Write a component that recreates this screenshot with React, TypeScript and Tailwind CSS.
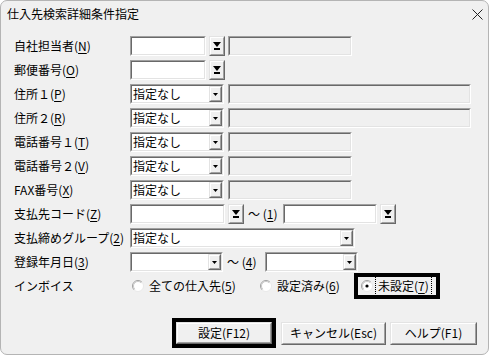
import React from "react";

type P = { cls: string; bg?: string; children?: React.ReactNode };

const Sunken = ({ cls, bg = "bg-white", children }: P) => (
  <div className={`${cls} h-[20px] shrink-0 border border-t-[#a0a0a0] border-l-[#a0a0a0] border-b-white border-r-white`}>
    <div className={`flex h-full w-full items-center border border-t-[#696969] border-l-[#696969] border-b-[#e3e3e3] border-r-[#e3e3e3] ${bg}`}>
      {children}
    </div>
  </div>
);

const Raised = ({ cls, children }: P) => (
  <div className={`${cls} shrink-0 border border-t-[#e3e3e3] border-l-[#e3e3e3] border-b-[#696969] border-r-[#696969] bg-[#f0f0f0]`}>
    <div className="flex h-full w-full items-center justify-center border border-t-white border-l-white border-b-[#a0a0a0] border-r-[#a0a0a0]">
      {children}
    </div>
  </div>
);

const BarArrow = () => (
  <svg width="8" height="8" viewBox="0 0 8 8">
    <polygon points="0,0 8,0 4,5" fill="#000" />
    <rect x="1" y="6" width="6" height="2" fill="#000" />
  </svg>
);

const SmallArrow = () => (
  <svg width="5" height="3" viewBox="0 0 5 3">
    <polygon points="0,0 5,0 2.5,3" fill="#000" />
  </svg>
);

const DropBtn = ({ cls }: { cls: string }) => (
  <Raised cls={`${cls} w-[16px] h-[20px]`}>
    <BarArrow />
  </Raised>
);

const Combo = ({ cls, text }: { cls: string; text?: string }) => (
  <Sunken cls={cls}>
    <span className="flex-1 pl-[1px] text-[12px] leading-none">{text}</span>
    <Raised cls="w-[13px] h-full">
      <SmallArrow />
    </Raised>
  </Sunken>
);

const Radio = ({ checked }: { checked?: boolean }) => (
  <svg width="12" height="12" viewBox="0 0 12 12" className="shrink-0">
    <circle cx="6" cy="6" r="5.5" fill="#fff" />
    <path d="M2.11 9.89 A5.5 5.5 0 0 1 9.89 2.11" fill="none" stroke="#a0a0a0" strokeWidth="1" />
    <path d="M2.8 9.2 A4.5 4.5 0 0 1 9.2 2.8" fill="none" stroke="#c8c8c8" strokeWidth="1" />
    <path d="M9.89 2.11 A5.5 5.5 0 0 1 2.11 9.89" fill="none" stroke="#e8e8e8" strokeWidth="1" />
    {checked && <circle cx="6" cy="6" r="1.6" fill="#000" />}
  </svg>
);

const Row = ({ label, children }: { label: React.ReactNode; children?: React.ReactNode }) => (
  <div className="flex h-[24px] items-center">
    <div className="w-[116px] shrink-0 whitespace-nowrap text-[12px] leading-none">{label}</div>
    {children}
  </div>
);

const U = ({ c }: { c: string }) => <span className="underline underline-offset-[2px]">{c}</span>;

export default function App() {
  return (
    <div className="h-[356px] w-[491px] bg-white font-['Noto_Sans_CJK_JP','Noto_Sans',sans-serif] text-black">
      <div className="flex h-[355px] w-[489px] flex-col overflow-hidden rounded-[7px] border border-[#b4b4b4] bg-[#f0f0f0]">
        <div className="flex h-[26px] shrink-0 items-center justify-between pl-[6px] pr-[5px]">
          <span className="text-[12px] leading-none">仕入先検索詳細条件指定</span>
          <svg width="11" height="11" viewBox="0 0 11 11">
            <path d="M0.5 0.5 L10.5 10.5 M10.5 0.5 L0.5 10.5" stroke="#222" strokeWidth="1" />
          </svg>
        </div>
        <div className="flex flex-col pl-[13px] pt-[7px]">
          <Row label={<>自社担当者(<U c="N" />)</>}>
            <Sunken cls="w-[76px]" />
            <DropBtn cls="ml-[3px]" />
            <Sunken cls="ml-[3px] w-[124px]" bg="bg-[#f0f0f0]" />
          </Row>
          <Row label={<>郵便番号(<U c="O" />)</>}>
            <Sunken cls="w-[76px]" />
            <DropBtn cls="ml-[3px]" />
          </Row>
          <Row label={<>住所１(<U c="P" />)</>}>
            <Combo cls="w-[94px]" text="指定なし" />
            <Sunken cls="ml-[4px] w-[243px]" bg="bg-[#f0f0f0]" />
          </Row>
          <Row label={<>住所２(<U c="R" />)</>}>
            <Combo cls="w-[94px]" text="指定なし" />
            <Sunken cls="ml-[4px] w-[243px]" bg="bg-[#f0f0f0]" />
          </Row>
          <Row label={<>電話番号１(<U c="T" />)</>}>
            <Combo cls="w-[94px]" text="指定なし" />
            <Sunken cls="ml-[4px] w-[124px]" bg="bg-[#f0f0f0]" />
          </Row>
          <Row label={<>電話番号２(<U c="V" />)</>}>
            <Combo cls="w-[94px]" text="指定なし" />
            <Sunken cls="ml-[4px] w-[124px]" bg="bg-[#f0f0f0]" />
          </Row>
          <Row label={<>FAX番号(<U c="X" />)</>}>
            <Combo cls="w-[94px]" text="指定なし" />
            <Sunken cls="ml-[4px] w-[124px]" bg="bg-[#f0f0f0]" />
          </Row>
          <Row label={<>支払先コード(<U c="Z" />)</>}>
            <Sunken cls="w-[95px]" />
            <DropBtn cls="ml-[3px]" />
            <span className="w-[39px] shrink-0 whitespace-nowrap pl-[4px] text-[12px] leading-none">
              ～ (<U c="1" />)
            </span>
            <Sunken cls="w-[94px]" />
            <DropBtn cls="ml-[3px]" />
          </Row>
          <Row label={<>支払締めグループ(<U c="2" />)</>}>
            <Combo cls="w-[225px]" text="指定なし" />
          </Row>
          <Row label={<>登録年月日(<U c="3" />)</>}>
            <Combo cls="w-[93px]" />
            <span className="w-[42px] shrink-0 whitespace-nowrap pl-[4px] text-[12px] leading-none">
              ～ (<U c="4" />)
            </span>
            <Combo cls="w-[93px]" />
          </Row>
          <Row label="インボイス">
            <div className="flex w-[129px] shrink-0 items-center pl-[2px] text-[12px] leading-none">
              <Radio />
              <span className="ml-[5px] whitespace-nowrap">全ての仕入先(<U c="5" />)</span>
            </div>
            <div className="flex w-[95px] shrink-0 items-center pl-[1px] text-[12px] leading-none">
              <Radio />
              <span className="ml-[5px] whitespace-nowrap">設定済み(<U c="6" />)</span>
            </div>
            <div className="flex h-[26px] w-[86px] shrink-0 items-center border-[4px] border-black pl-[3px] text-[12px] leading-none">
              <Radio checked />
              <span className="ml-[2px] whitespace-nowrap border border-dotted border-black px-[2px] py-[3px]">
                未設定(<U c="7" />)
              </span>
            </div>
          </Row>
        </div>
        <div className="mt-[20px] flex items-center pl-[171px] text-[12px] leading-none">
          <div className="h-[30px] w-[104px] shrink-0 border-[4px] border-black">
            <Raised cls="h-full w-full">設定(F12)</Raised>
          </div>
          <Raised cls="ml-[5px] h-[23px] w-[105px]">キャンセル(Esc)</Raised>
          <Raised cls="ml-[4px] h-[23px] w-[87px]">ヘルプ(F1)</Raised>
        </div>
      </div>
    </div>
  );
}
